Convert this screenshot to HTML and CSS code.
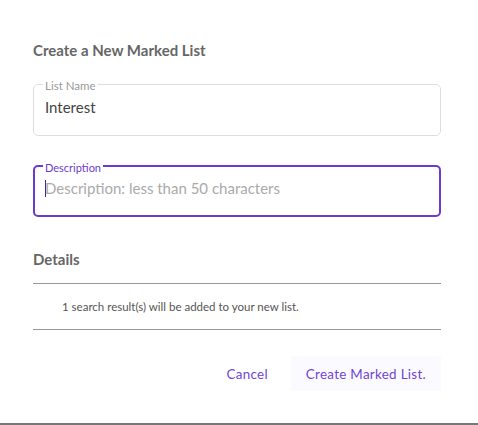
FILE: index.html
```html
<!DOCTYPE html>
<html>
<head>
<meta charset="utf-8">
<link rel="stylesheet" href="styles.css">
</head>
<body>
<div class="dialog">
  <h2 class="title">Create a New Marked List</h2>
  <fieldset class="field">
    <legend class="field-label">List Name</legend>
    <div class="field-value">Interest</div>
  </fieldset>
  <fieldset class="field field-focused">
    <legend class="field-label">Description</legend>
    <div class="field-value placeholder"><span class="caret"></span>Description: less than 50 characters</div>
  </fieldset>
  <h3 class="section-title">Details</h3>
  <div class="details">1 search result(s) will be added to your new list.</div>
  <div class="actions">
    <button class="btn btn-text">Cancel</button>
    <button class="btn btn-primary">Create Marked List.</button>
  </div>
</div>
<div class="bottom-rule"></div>
</body>
</html>
```
FILE: styles.css
```css
html, body {
  margin: 0;
  padding: 0;
  background: #fff;
}
body {
  font-family: "Lato", "Noto Sans", sans-serif;
  color: #555;
  width: 478px;
  height: 425px;
  display: flex;
  flex-direction: column;
  overflow: hidden;
}
.dialog {
  padding: 40px 37px 0 33px;
  flex: 1;
}
.title {
  margin: 0;
  font-size: 15px;
  font-weight: 700;
  color: #666;
  line-height: 20px;
}
.field {
  margin: 16px 0 0;
  padding: 0 11px;
  border: 1px solid #ddd;
  border-radius: 5px;
  height: 60px;
  box-sizing: border-box;
  min-width: 0;
}
.field-label {
  font-size: 11.5px;
  color: #999;
  padding: 4px 2px 0;
  margin-left: -2px;
  line-height: 12px;
}
.field-value {
  font-size: 15px;
  color: #444;
  line-height: 20px;
  margin-top: 5px;
}
.field-focused {
  margin-top: 22px;
  height: 59px;
  border: 2px solid #6a3bd0;
  padding: 0 10px;
}
.field-focused .field-label {
  color: #6a3bd0;
  font-size: 11px;
}
.field-focused .field-value {
  margin-top: 4px;
}
.placeholder {
  color: #aaa;
}
.caret {
  display: inline-block;
  width: 1px;
  height: 17px;
  background: #3a2aa0;
  vertical-align: -3px;
  margin-right: -1px;
}
.section-title {
  margin: 32px 0 0;
  font-size: 15px;
  font-weight: 700;
  color: #666;
  line-height: 20px;
}
.details {
  margin-top: 14px;
  border-top: 1px solid #999;
  border-bottom: 1px solid #999;
  padding: 0 0 0 29px;
  height: 45px;
  display: flex;
  align-items: center;
  font-size: 11.5px;
  color: #555;
}
.actions {
  margin-top: 26px;
  display: flex;
  justify-content: flex-end;
  align-items: center;
  gap: 23px;
}
.btn {
  font-family: inherit;
  font-size: 13.4px;
  color: #7044d8;
  background: transparent;
  border: none;
  padding: 0;
  letter-spacing: 0.3px;
}
.btn-primary {
  background: #fbfbff;
  height: 35px;
  padding: 0 15px;
}
.bottom-rule {
  height: 2px;
  background: #777;
}
```
